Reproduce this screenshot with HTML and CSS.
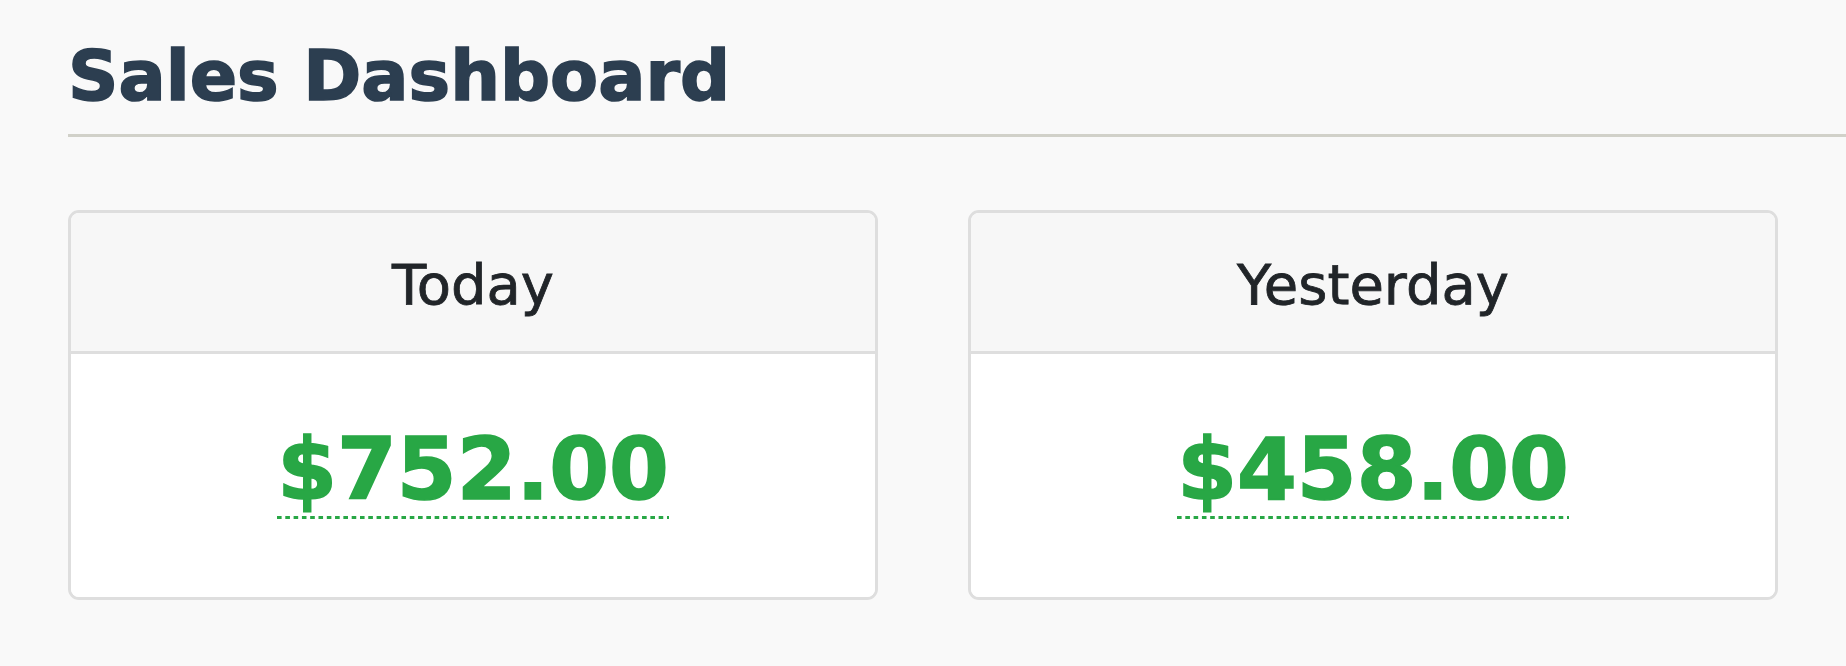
FILE: index.html
```html
<!DOCTYPE html>
<html lang="en">
<head>
<meta charset="utf-8">
<title>Sales Dashboard</title>
<link rel="stylesheet" href="styles.css">
</head>
<body>
<header class="page-header">
  <h1 class="page-title">Sales Dashboard</h1>
</header>
<main class="cards">
  <section class="card">
    <div class="card-header">Today</div>
    <div class="card-body"><abbr class="amount" title="Total sales today">$752.00</abbr></div>
  </section>
  <section class="card">
    <div class="card-header">Yesterday</div>
    <div class="card-body"><abbr class="amount" title="Total sales yesterday">$458.00</abbr></div>
  </section>
</main>
</body>
</html>
```
FILE: styles.css
```css
* { box-sizing: border-box; }

html, body {
  margin: 0;
  padding: 0;
}

body {
  background: #f9f9f9;
  font-family: "DejaVu Sans", Verdana, sans-serif;
  color: #212529;
}

.page-header {
  margin: 0 0 0 68px;
  padding: 41px 0 23px 0;
  border-bottom: 3px solid #d1d1c9;
}

.page-title {
  margin: 0;
  font-size: 70px;
  line-height: 70px;
  font-weight: bold;
  color: #2c3e50;
  -webkit-text-stroke: 1.6px #2c3e50;
}

.cards {
  display: grid;
  grid-template-columns: 1fr 1fr;
  gap: 90px;
  margin: 73px 68px 0 68px;
}

.card {
  height: 390px;
  display: flex;
  flex-direction: column;
  border: 3px solid #dedede;
  border-radius: 11px;
  overflow: hidden;
  background: #ffffff;
}

.card-header {
  height: 141px;
  flex: none;
  display: flex;
  align-items: center;
  justify-content: center;
  padding-top: 4px;
  background: #f7f7f7;
  border-bottom: 3px solid #dedede;
  font-size: 56px;
  font-weight: normal;
  color: #212529;
  -webkit-text-stroke: 0.8px #212529;
}

.card-body {
  flex: 1;
  display: flex;
  align-items: center;
  justify-content: center;
  padding-bottom: 14px;
  background: #ffffff;
}

.amount {
  font-size: 86px;
  font-weight: bold;
  color: #28a745;
  -webkit-text-stroke: 1.6px #28a745;
  text-decoration: none;
  background-image: linear-gradient(to right, #28a745 0, #28a745 4.5px, transparent 4.5px);
  background-size: 8.3px 3px;
  background-repeat: repeat-x;
  background-position: 0 100%;
  cursor: help;
}
```
